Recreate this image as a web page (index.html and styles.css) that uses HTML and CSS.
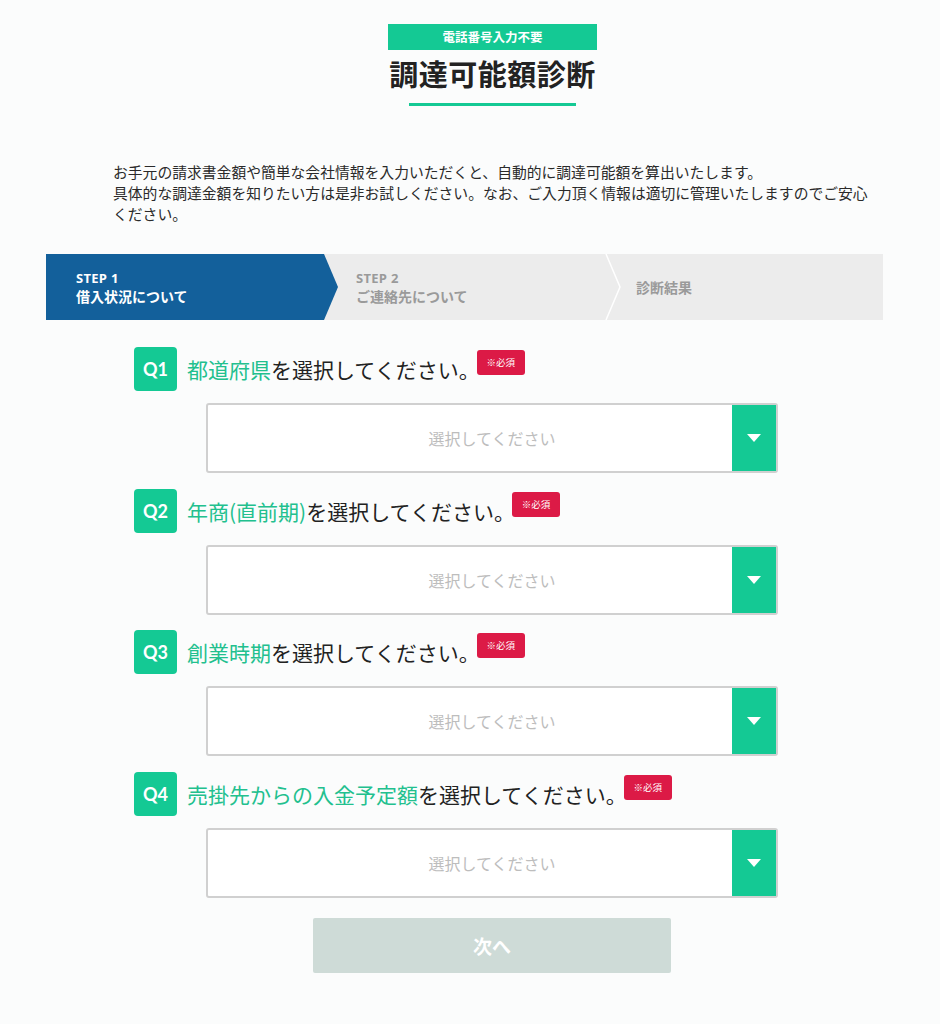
FILE: index.html
```html
<!DOCTYPE html>
<html lang="ja">
<head>
<meta charset="utf-8">
<title>調達可能額診断</title>
<link rel="stylesheet" href="styles.css">
</head>
<body>
<div class="page">
  <header class="hero">
    <div class="hero-badge">電話番号入力不要</div>
    <h1 class="hero-title">調達可能額診断</h1>
    <div class="hero-line"></div>
  </header>

  <p class="intro">お手元の請求書金額や簡単な会社情報を入力いただくと、自動的に調達可能額を算出いたします。<br>具体的な調達金額を知りたい方は是非お試しください。なお、ご入力頂く情報は適切に管理いたしますのでご安心ください。</p>

  <nav class="steps">
    <div class="step step-active">
      <span class="step-num">STEP 1</span>
      <span class="step-name">借入状況について</span>
    </div>
    <div class="step step-two">
      <span class="step-num">STEP 2</span>
      <span class="step-name">ご連絡先について</span>
    </div>
    <svg class="step-sep" width="16" height="66" viewBox="0 0 16 66"><polyline points="1,0 15,33 1,66" fill="none" stroke="#ffffff" stroke-width="1.5"/></svg>
    <div class="step step-three">
      <span class="step-name">診断結果</span>
    </div>
  </nav>

  <form class="questions">
    <div class="q">
      <div class="q-head">
        <span class="q-no">Q1</span>
        <span class="q-text"><span class="hl">都道府県</span>を選択してください。</span>
        <span class="req">※必須</span>
      </div>
      <div class="select"><span class="ph">選択してください</span><span class="arrow"></span></div>
    </div>
    <div class="q">
      <div class="q-head">
        <span class="q-no">Q2</span>
        <span class="q-text"><span class="hl">年商(直前期)</span>を選択してください。</span>
        <span class="req">※必須</span>
      </div>
      <div class="select"><span class="ph">選択してください</span><span class="arrow"></span></div>
    </div>
    <div class="q">
      <div class="q-head">
        <span class="q-no">Q3</span>
        <span class="q-text"><span class="hl">創業時期</span>を選択してください。</span>
        <span class="req">※必須</span>
      </div>
      <div class="select"><span class="ph">選択してください</span><span class="arrow"></span></div>
    </div>
    <div class="q">
      <div class="q-head">
        <span class="q-no">Q4</span>
        <span class="q-text"><span class="hl">売掛先からの入金予定額</span>を選択してください。</span>
        <span class="req">※必須</span>
      </div>
      <div class="select"><span class="ph">選択してください</span><span class="arrow"></span></div>
    </div>
    <div class="submit-row">
      <button type="button" class="next">次へ</button>
    </div>
  </form>
</div>
</body>
</html>
```
FILE: styles.css
```css
* { box-sizing: border-box; }
html, body { margin: 0; padding: 0; }
body {
  background: #fbfcfc;
  color: #2a2a2a;
  font-family: "Noto Sans CJK JP", "Noto Sans", sans-serif;
}
.page { width: 940px; padding-top: 24px; padding-bottom: 50px; }

.hero {
  display: flex;
  flex-direction: column;
  align-items: center;
  padding-left: 45px;
}
.hero-badge {
  width: 209px;
  height: 26px;
  background: #14c994;
  color: #fff;
  font-size: 12.5px;
  font-weight: 700;
  line-height: 26px;
  text-align: center;
}
.hero-title {
  margin: 3px 0 0;
  font-size: 29px;
  font-weight: 700;
  line-height: 40px;
  color: #222;
  letter-spacing: 0.5px;
}
.hero-line {
  width: 167px;
  height: 3px;
  background: #14c994;
  margin-top: 10px;
}

.intro {
  margin: 55px 0 0 113px;
  width: 760px;
  font-size: 14.8px;
  line-height: 21px;
  color: #2a2a2a;
}

.steps {
  margin: 30px 0 0 46px;
  width: 837px;
  height: 66px;
  background: #ececec;
  display: flex;
  align-items: stretch;
}
.step {
  display: flex;
  flex-direction: column;
  justify-content: center;
  font-weight: 700;
  color: #9a9a9a;
}
.step-num {
  font-family: "Open Sans", "Noto Sans", sans-serif;
  font-size: 13px;
  line-height: 18px;
  letter-spacing: 0.3px;
}
.step-name { font-size: 14px; line-height: 19px; }
.step-active {
  width: 292px;
  padding-left: 30px;
  background: #13609b;
  color: #fff;
  clip-path: polygon(0 0, 278px 0, 100% 50%, 278px 100%, 0 100%);
}
.step-two { width: 267px; padding-left: 18px; }
.step-sep { flex: none; display: block; }
.step-three { padding-left: 15px; }
.step-three .step-name { font-size: 14px; }

.questions { margin: 27px 0 0 134px; width: 644px; }
.q { margin-bottom: 15.5px; }
.q-head { display: flex; align-items: center; height: 44px; }
.q-no {
  flex: none;
  width: 43px;
  height: 44px;
  border-radius: 4px;
  background: #14c994;
  color: #fff;
  font-family: "Lato", "Open Sans", sans-serif;
  font-weight: 700;
  font-size: 18px;
  line-height: 44px;
  text-align: center;
}
.q-text {
  margin-left: 10px;
  font-size: 21px;
  line-height: 30px;
  color: #222;
}
.hl { color: #22c08e; }
.req {
  align-self: flex-start;
  margin-top: 3px;
  margin-left: -3px;
  width: 48px;
  height: 25px;
  border-radius: 3px;
  background: #dc1a46;
  color: #fff;
  font-size: 9.5px;
  line-height: 25px;
  text-align: center;
}
.select {
  position: relative;
  margin: 12px 0 0 72px;
  width: 572px;
  height: 70px;
  background: #fff;
  border: 2px solid #d0d0d0;
  border-radius: 3px;
  display: flex;
  align-items: center;
  justify-content: center;
}
.ph { font-size: 16px; color: #bdbdbd; }
.arrow {
  position: absolute;
  top: 0;
  right: 0;
  width: 44px;
  height: 100%;
  background: #14c994;
}
.arrow::after {
  content: "";
  position: absolute;
  left: 50%;
  top: 50%;
  margin: -4px 0 0 -7px;
  border-left: 7px solid transparent;
  border-right: 7px solid transparent;
  border-top: 8px solid #fff;
}
.submit-row { padding-left: 179px; padding-top: 4.5px; }
.next {
  width: 358px;
  height: 55px;
  border: none;
  border-radius: 2px;
  background: #cedbd7;
  color: #fff;
  font-family: "Noto Sans CJK JP", sans-serif;
  font-weight: 700;
  font-size: 19px;
  padding: 0;
}
```
